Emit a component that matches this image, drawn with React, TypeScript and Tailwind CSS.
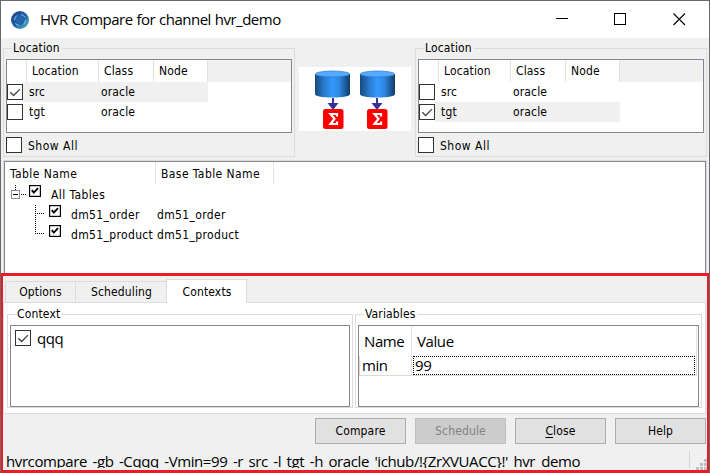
import type { ReactNode } from "react";

const segoe = "font-stretch-normal font-['Open_Sans','Noto_Sans',sans-serif]";

function Tick({ className }: { className: string }) {
  return (
    <span className={`block size-4 shrink-0 border border-[#333] bg-white ${className}`}>
      <svg viewBox="0 0 14 14" className="size-[14px]" fill="none" stroke="#444" strokeWidth="1.3">
        <path d="M2.3 7.2 5.6 10.5 12 4.1" />
      </svg>
    </span>
  );
}

function Box({ checked, className = "" }: { checked?: boolean; className?: string }) {
  return checked ? (
    <Tick className={className} />
  ) : (
    <span className={`block size-4 shrink-0 border border-[#333] bg-white ${className}`} />
  );
}

function Group({ title, className, children }: { title: string; className: string; children: ReactNode }) {
  return (
    <fieldset className={`min-w-0 border border-[#dcdcdc] ${className}`}>
      <legend className="ml-[6px] h-[17px] pr-[2px] pl-px leading-[17px]">{title}</legend>
      {children}
    </fieldset>
  );
}

function LocationGroup({ selected, className }: { selected: string; className: string }) {
  return (
    <Group title="Location" className={`h-[117px] pt-[2px] pl-[2px] ${className}`}>
      <div className="h-[74px] w-[286px] border border-[#828790] bg-white">
        <div className="flex h-[22px] bg-[#f0f0f0] leading-[23px]">
          <div className="w-5 border-r border-[#e2e2e2] bg-white" />
          <div className="w-[72px] border-r border-[#e2e2e2] bg-white pl-[5px]">Location</div>
          <div className="w-[55px] border-r border-[#e2e2e2] bg-white pl-[5px]">Class</div>
          <div className="w-[54px] border-r border-[#e2e2e2] bg-white pl-[5px]">Node</div>
        </div>
        {["src", "tgt"].map((name) => (
          <div key={name} className="flex h-5 w-[201px] leading-[21px]">
            <div className="w-4 pt-[2px]">
              <Box checked={name === selected} />
            </div>
            <div className={name === selected ? "flex flex-1 bg-[#f0f0f0] pl-[6px]" : "flex flex-1 pl-[6px]"}>
              <span className="w-[72px]">{name}</span>
              <span>oracle</span>
            </div>
          </div>
        ))}
      </div>
      <div className="flex pt-1">
        <Box checked={false} />
        <span className="pl-[6px] leading-[18px] tracking-[0.5px]">Show All</span>
      </div>
    </Group>
  );
}

function Database({ x, cx }: { x: number; cx: number }) {
  return (
    <g>
      <path d={`M${x} 7v20c0 2 6 3.5 17.5 3.5S${x + 35} 29 ${x + 35} 27V7z`} fill="url(#cyl)" />
      <ellipse cx={x + 17.5} cy="7" rx="17.2" ry="3" fill="#55aaff" stroke="#2a78c8" strokeWidth=".7" />
      <path d={`M${cx - 1} 31h2v5h4.500l-5.500 7l-5.500-7h4.500z`} fill="#333399" />
      <rect x={cx - 10} y="42" width="20.500" height="20" rx="2.500" fill="#f00" />
      <path
        d={`M${cx + 4} 49.500v-2.500h-6.500l4 4.700l-4 5.300h6.500v-2.500`}
        fill="none"
        stroke="#fff"
        strokeWidth="2.200"
      />
    </g>
  );
}

function TreeBox() {
  return (
    <svg width="12" height="12" viewBox="0 0 12 12" className="shrink-0" fill="none" stroke="#000">
      <rect x=".6" y=".6" width="10.800" height="10.800" strokeWidth="1.200" />
      <path d="M2.800 5.200 4.800 7.600 9 3.200" strokeWidth="1.800" />
    </svg>
  );
}

function PushButton({ children, disabled }: { children: ReactNode; disabled?: boolean }) {
  return (
    <button
      className={
        disabled
          ? "h-[26px] w-[91px] border border-[#bfbfbf] bg-[#cccccc] text-[#838383]"
          : "h-[26px] w-[91px] border border-[#adadad] bg-[#e1e1e1]"
      }
    >
      {children}
    </button>
  );
}

export default function App() {
  return (
    <div className="relative flex h-[473px] w-[710px] flex-col overflow-hidden border-x border-t border-[#6b676b] bg-[#f0f0f0] font-['DejaVu_Sans_Condensed','DejaVu_Sans',sans-serif] text-[12px] font-stretch-condensed tracking-[0.15px] whitespace-nowrap text-black">
      <header className="flex h-[37px] shrink-0 items-center bg-white pl-[10px]">
        <svg width="18" height="18" viewBox="0 0 18 18">
          <defs>
            <linearGradient id="logo" x1="0" y1="0" x2="1" y2="1">
              <stop offset="0" stopColor="#233f91" />
              <stop offset=".5" stopColor="#1d5fa5" />
              <stop offset="1" stopColor="#4cc9c0" />
            </linearGradient>
          </defs>
          <circle cx="9" cy="9" r="9" fill="url(#logo)" />
          <circle cx="9" cy="9" r="5" fill="#2364ad" />
          <g fill="none" stroke="#a9d3e8" strokeWidth=".9" strokeLinecap="round">
            <path d="M3.500 8.500A5.600 5.600 0 0 1 5.500 4.700" />
            <path d="M10.500 3.500A5.600 5.600 0 0 1 13.500 5.600" />
            <path d="M14.600 9.500A5.600 5.600 0 0 1 13 13" />
            <path d="M7.500 14.500A5.600 5.600 0 0 1 4.700 12.700" />
          </g>
        </svg>
        <h1 className={`pl-[11px] text-[15px] tracking-[-0.5px] [word-spacing:0.5px] ${segoe}`}>
          HVR Compare for channel hvr_demo
        </h1>
        <svg className="mr-[23px] ml-auto" width="131" height="13" viewBox="0 0 131 13" fill="none" stroke="#000">
          <path d="M1 5.500h12" />
          <rect x="59.500" y=".5" width="11" height="11" />
          <path d="m118.500.5 11.500 11.500m0-11.500-11.500 11.500" strokeWidth="1.100" />
        </svg>
      </header>

      <section className="flex h-[123px] shrink-0 items-start pt-[2px] pl-[2px]">
        <LocationGroup selected="src" className="w-[292px]" />
        <svg className="mt-[27px] ml-1 bg-white" width="112" height="64" viewBox="0 0 112 64">
          <defs>
            <linearGradient id="cyl">
              <stop offset="0" stopColor="#174a7e" />
              <stop offset=".25" stopColor="#2878c8" />
              <stop offset=".5" stopColor="#3399ff" />
              <stop offset=".7" stopColor="#2d86df" />
              <stop offset="1" stopColor="#133b66" />
            </linearGradient>
          </defs>
          <Database x={16} cx={34} />
          <Database x={61} cx={78} />
        </svg>
        <LocationGroup selected="tgt" className="ml-1 w-[292px]" />
      </section>

      <section className="mx-[3px] h-[112px] shrink-0 border border-b-0 border-[#828790] bg-white shadow-[0_0_0_1px_#dcdcdc]">
        <div className="flex h-[22px] leading-[24px]">
          <div className="w-[151px] border-r border-[#e2e2e2] pl-[5px] tracking-[0.42px]">Table Name</div>
          <div className="w-[118px] border-r border-[#e2e2e2] pl-[5px] tracking-[0.42px]">Base Table Name</div>
        </div>
        <div className="flex">
          <svg className="ml-[6px]" width="40" height="56" viewBox="0 0 40 56" fill="none">
            <rect x=".5" y="6.500" width="8" height="8" stroke="#919191" />
            <path d="M2 10.500h5" stroke="#000" />
            <path d="M4.500 1v5M10 10.500h5M24.500 21v29M26 29.500h8M26 49.500h8" stroke="#000" strokeDasharray="1 1" />
          </svg>
          <ul className="-ml-[22px] pt-px leading-[20px]">
            <li className="flex h-5">
              <TreeBox />
              <span className="pl-[10px] tracking-[0.4px]">All Tables</span>
            </li>
            {["dm51_order", "dm51_product"].map((name) => (
              <li key={name} className="flex h-5 pl-5 tracking-[0.35px]">
                <TreeBox />
                <span className="w-[96px] pl-[10px]">{name}</span>
                <span>{name}</span>
              </li>
            ))}
          </ul>
        </div>
      </section>

      <section className="-mx-px flex h-[200px] shrink-0 flex-col border-[3px] border-[#ed1c24] bg-[#f0f0f0]">
        <nav className="z-10 -mb-px flex h-[27px] items-end pt-[3px] pl-[2px] text-center">
          <div className="mb-px h-[21px] w-[71px] border border-b-0 border-[#dcdcdc] leading-[21px]">Options</div>
          <div className="mb-px h-[21px] w-[90px] border-t border-[#dcdcdc] pl-px leading-[21px]">Scheduling</div>
          <div className="h-[24px] w-[81px] border border-b-0 border-[#dcdcdc] bg-white pl-px leading-[24px]">Contexts</div>
        </nav>
        <div className="mr-[1px] flex h-[112px] items-start border border-[#dcdcdc] bg-white pt-[3px] pl-[3px]">
          <Group title="Context" className="h-[102px] w-[346px] pt-[2px] pl-[2px]">
            <div
              className={`flex h-[82px] w-[340px] border border-[#828790] pt-1 pl-1 text-[15px] tracking-[-0.4px] ${segoe}`}
            >
              <Box checked />
              <span className="pl-[6px] leading-[17px]">qqq</span>
            </div>
          </Group>
          <Group title="Variables" className="ml-[2px] h-[102px] w-[347px] pt-[2px] pl-[2px]">
            <div className={`h-[82px] w-[341px] border border-[#828790] text-[15px] tracking-[-0.4px] ${segoe}`}>
              <div className="flex h-[30px] leading-[30px]">
                <div className="w-[53px] border-r border-[#e2e2e2] pl-[5px]">Name</div>
                <div className="w-[285px] border-r border-[#e2e2e2] pl-[5px]">Value</div>
              </div>
              <div className="flex h-5 w-[338px] border-r border-b border-l border-[#dcdcdc] leading-[18px]">
                <div className="w-[52px] border-r border-[#dcdcdc] pl-[2px]">min</div>
                <div className="mr-px ml-px h-[19px] flex-1 border border-dotted border-black pl-[1px] leading-[16px]">99</div>
              </div>
            </div>
          </Group>
        </div>
        <div className="flex gap-[9px] pt-1 pl-[312px]">
          <PushButton>Compare</PushButton>
          <PushButton disabled>Schedule</PushButton>
          <PushButton>
            <span className="underline underline-offset-2">C</span>lose
          </PushButton>
          <PushButton>Help</PushButton>
        </div>
        <footer className="flex h-[26px] pt-[7px] pl-[3px]">
          <p
            className={`h-[17px] overflow-hidden text-[15px] leading-[21px] tracking-[-0.4px] [word-spacing:2px] ${segoe}`}
          >
            hvrcompare -gb -Cqqq -Vmin=99 -r src -l tgt -h oracle 'ichub/!{"{"}ZrXVUACC{"}"}!' hvr_demo
          </p>
          <span className="ml-auto h-[17px] border-l border-[#d4d4d4]" />
          <svg className="mt-2 ml-[6px]" width="11" height="11" viewBox="0 0 11 11" fill="#bfbfbf">
            <path d="M8 0h3v3H8zM4 4h3v3H4zM8 4h3v3H8zM0 8h3v3H0zM4 8h3v3H4zM8 8h3v3H8z" />
          </svg>
        </footer>
      </section>
    </div>
  );
}
